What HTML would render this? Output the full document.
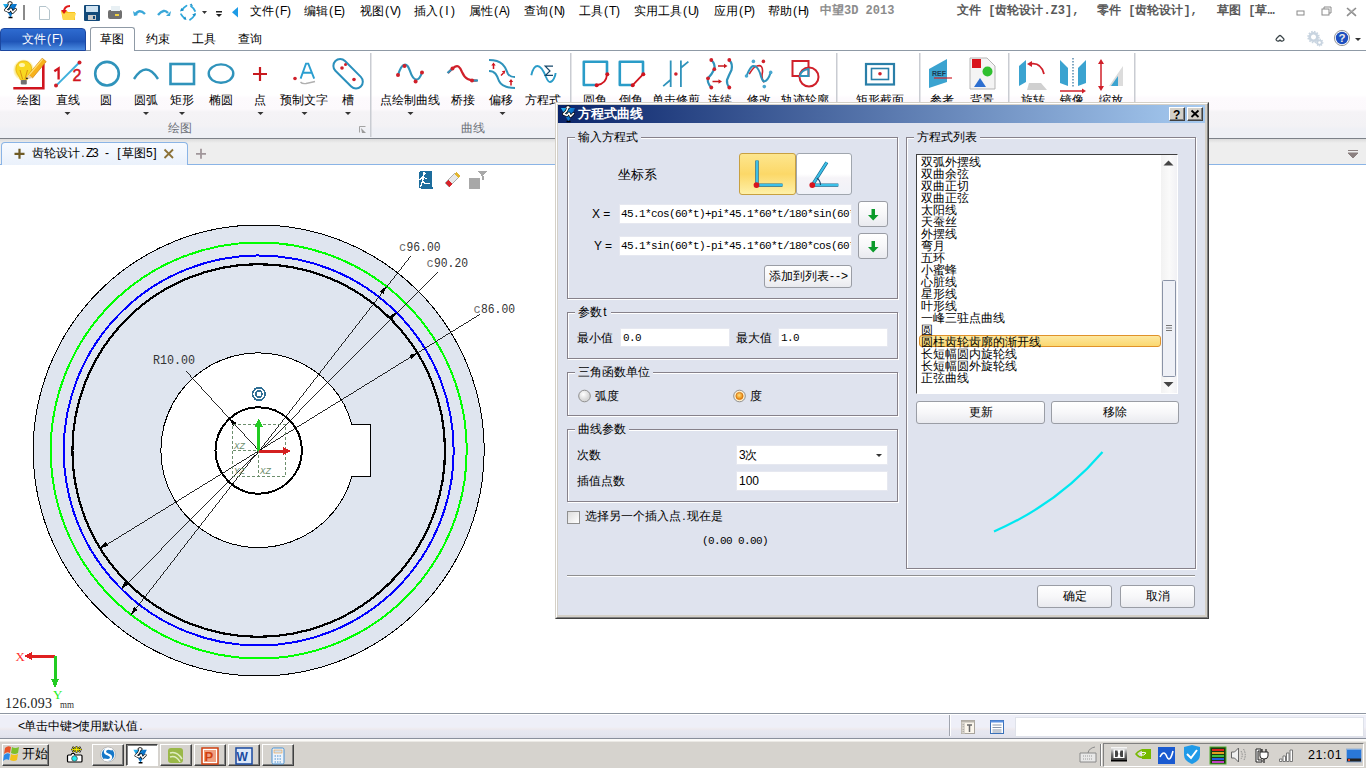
<!DOCTYPE html>
<html><head><meta charset="utf-8">
<style>
*{margin:0;padding:0;box-sizing:border-box}
html,body{width:1366px;height:768px;overflow:hidden;background:#fff;font-family:"Liberation Sans",sans-serif;font-size:12px;color:#000}
.a{position:absolute}
.t{position:absolute;white-space:nowrap;line-height:14px}
#ribbon{left:0;top:51px;width:1366px;height:88px;background:linear-gradient(#fff 0px,#fff 44px,#fdfafd 47px,#fcf9fc 58px,#f5f3f6 61px,#f3f2f5 75px,#eff0f5 78px,#eef0f5 87px);border-bottom:1px solid #7c8188}
#doctabs{left:0;top:139px;width:1366px;height:26px;background:linear-gradient(#dcdcdc,#eeeeee 4px,#eeeeee);border-bottom:1px solid #8ab4e6}
#status{left:0;top:713px;width:1366px;height:26px;background:linear-gradient(#fff 0px,#fff 1px,#eeeff8 1px,#eeeff8 13px,#eeeaee 15px,#e6e7f0 17px,#e4e5ee 21px,#dcdde8 25px);border-top:1px solid #8e96a2;border-bottom:1px solid #8a909c}
#taskbar{left:0;top:739px;width:1366px;height:29px;background:linear-gradient(#fbfaf8 0px,#fbfaf8 2px,#ebe9e5 2px,#ebe9e5 3px,#d6d3ce 3px)}
#dlg{left:555px;top:102px;width:653px;height:516px;background:#d4d0c8;border-right:1px solid #404040;border-bottom:1px solid #404040;border-top:1px solid #f4f3ee;border-left:1px solid #f4f3ee}
#dlgbody{left:2px;top:21px;width:648px;height:491px;background:#dfe3ee}
#dlgtitle{left:2px;top:2px;width:648px;height:18px;background:linear-gradient(90deg,#0a246a,#a6caf0)}
.grp{position:absolute;border:1px solid #86818a;box-shadow:inset 1px 1px 0 #fff, 1px 1px 0 #fff}
.gt{position:absolute;background:#dfe3ee;padding:0 3px;top:-8px;left:7px;line-height:14px;white-space:nowrap}
.inp{position:absolute;background:#fff;border:1px solid #e6e8f0}
.btn{position:absolute;background:linear-gradient(#fff,#f7f7f9 50%,#e9eaef);border:1px solid #9a9da5;border-radius:3px;text-align:center;line-height:20px}
.mono{font-family:"Liberation Mono",monospace}
.li{position:absolute;left:920px;white-space:nowrap;line-height:12px;font-size:12px}
c{display:inline-block;width:1em;text-align:center;font-style:normal}
h{display:inline-block;width:0.5em;text-align:center;font-weight:inherit}
</style></head><body>
<svg width="0" height="0" style="position:absolute"><defs>
<linearGradient id="appg" x1="0" y1="0" x2="1" y2="1"><stop offset="0" stop-color="#28c0f8"/><stop offset="0.5" stop-color="#0a70c8"/><stop offset="1" stop-color="#1a98e8"/></linearGradient>
<symbol id="app" viewBox="0 0 24 24">
 <path d="M3 4 H17 L10.5 17.5 Z" fill="url(#appg)"/>
 <path d="M10 3.5 L8.5 7 L5.5 10 L9 11.5 L11 9 L12.5 12.5 L15.5 9.5" fill="none" stroke="#000" stroke-width="2.8" stroke-linejoin="round" stroke-linecap="round"/>
 <ellipse cx="10" cy="3.2" rx="2.2" ry="1.5" fill="#fff" stroke="#000" stroke-width="0.9"/>
 <path d="M10 3.5 L8.5 7 L5.5 10 L9 11.5 L11 9 L12.5 12.5 L15.5 9.5" fill="none" stroke="#fff" stroke-width="1.5" stroke-linejoin="round" stroke-linecap="round"/>
 <path d="M8.5 17.5 H12.5" stroke="#000" stroke-width="1.5"/>
</symbol></defs></svg>
<!-- title bar -->
<div class="a" style="left:0;top:0;width:1366px;height:24px;background:#fff"></div>
<svg class="a" style="left:0;top:0" width="250" height="24">
 <use href="#app" x="0" y="0" width="24" height="24"/>
 <rect x="23" y="5" width="2" height="15" fill="#8a8a8a"/>
 <path d="M39.5 6.5 H46 L49.5 10 V19.5 H39.5 Z" fill="#fff" stroke="#b4c4cc"/>
 <path d="M61 11 H67 L68 12 H75 V20 H63 Z" fill="#f7c21e"/>
 <path d="M62 13 H76 L74 20 H63 Z" fill="#ffd84a"/>
 <path d="M70 6 Q64 6 64 12" fill="none" stroke="#e01a1a" stroke-width="2"/>
 <path d="M61 10 L67 10 L64 14 Z" fill="#e01a1a"/>
 <rect x="84" y="5" width="16" height="16" rx="1" fill="#134a7a"/>
 <rect x="86" y="6" width="12" height="6" fill="#cfe3f2"/>
 <rect x="88" y="15" width="8" height="5" fill="#c9c9c9"/>
 <rect x="93" y="16" width="2" height="3" fill="#134a7a"/>
 <rect x="108" y="10" width="14" height="9" rx="2" fill="#707070"/>
 <rect x="111" y="6" width="9" height="5" fill="#e8f0f4"/>
 <rect x="115" y="14" width="4" height="2" fill="#f0d040"/>
 <path d="M135 15 Q139 8 145 14" fill="none" stroke="#3aa7d8" stroke-width="2.4"/>
 <path d="M133 11 L138 15 L134 16 Z" fill="#3aa7d8"/>
 <path d="M158 15 Q164 8 168 13" fill="none" stroke="#3aa7d8" stroke-width="2.4"/>
 <path d="M171 11 L166 16 L170 16 Z" fill="#3aa7d8"/>
 <g stroke="#30a8dc" stroke-width="1.8" fill="none" stroke-linecap="round">
  <path d="M186.5 5.8 Q183.5 7.5 182.2 10"/><path d="M181 14.2 Q182.5 17 185 18.6"/><path d="M190 19.8 Q193.5 17.5 194.8 14.5"/><path d="M195 11 Q193.5 8 191 6.3"/>
 </g>
 <g fill="#1a90c8"><path d="M180 11.5 L184 10.2 L181.3 8 Z"/><path d="M186.5 20 L185.3 16.5 L183.2 19 Z"/><path d="M196 13 L192.2 14.5 L195 16.5 Z"/><path d="M189.5 5 L193 6.2 L191.5 3.5 Z"/></g>
 <path d="M202 11 H207 L204.5 14 Z" fill="#333"/>
 <rect x="216" y="11" width="6" height="1.5" fill="#222"/>
 <path d="M216 14 H222 L219 17 Z" fill="#222"/>
 <path d="M238 7 V17.5 L232 12.2 Z" fill="#1e9be6"/>
</svg>
<div class="t" style="left:250px;top:4px"><c>文</c><c>件</c><h>(</h><h>F</h><h>)</h></div>
<div class="t" style="left:304px;top:4px"><c>编</c><c>辑</c><h>(</h><h>E</h><h>)</h></div>
<div class="t" style="left:360px;top:4px"><c>视</c><c>图</c><h>(</h><h>V</h><h>)</h></div>
<div class="t" style="left:414px;top:4px"><c>插</c><c>入</c><h>(</h><h>I</h><h>)</h></div>
<div class="t" style="left:469px;top:4px"><c>属</c><c>性</c><h>(</h><h>A</h><h>)</h></div>
<div class="t" style="left:524px;top:4px"><c>查</c><c>询</c><h>(</h><h>N</h><h>)</h></div>
<div class="t" style="left:579px;top:4px"><c>工</c><c>具</c><h>(</h><h>T</h><h>)</h></div>
<div class="t" style="left:634px;top:4px"><c>实</c><c>用</c><c>工</c><c>具</c><h>(</h><h>U</h><h>)</h></div>
<div class="t" style="left:714px;top:4px"><c>应</c><c>用</c><h>(</h><h>P</h><h>)</h></div>
<div class="t" style="left:768px;top:4px"><c>帮</c><c>助</c><h>(</h><h>H</h><h>)</h></div>
<div class="t" style="left:820px;top:4px;color:#8c8c8c;font-weight:bold;font-family:'Liberation Mono',sans-serif"><c>中</c><c>望</c>3D 2013</div>
<div class="t" style="left:957px;top:4px;color:#595959;font-weight:bold;font-family:'Liberation Mono',sans-serif"><c>文</c><c>件</c> [<c>齿</c><c>轮</c><c>设</c><c>计</c>.Z3],</div>
<div class="t" style="left:1097px;top:4px;color:#595959;font-weight:bold;font-family:'Liberation Mono',sans-serif"><c>零</c><c>件</c> [<c>齿</c><c>轮</c><c>设</c><c>计</c>],</div>
<div class="t" style="left:1217px;top:4px;color:#595959;font-weight:bold;font-family:'Liberation Mono',sans-serif"><c>草</c><c>图</c> [<c>草</c>…</div>
<svg class="a" style="left:1290px;top:0" width="76" height="24">
 <rect x="7" y="11" width="7" height="4" fill="none" stroke="#8a8a8a"/>
 <rect x="32" y="9" width="7" height="6" fill="none" stroke="#8a8a8a"/><path d="M34 9 V7 H41 V13 H39" fill="none" stroke="#8a8a8a"/>
 <path d="M57 8 L66 16 M66 8 L57 16" stroke="#8a8a8a" stroke-width="1.6"/><path d="M58 8 L66 15 M65 8 L57 15" stroke="#b0b0b0" stroke-width="1"/>
</svg>
<!-- tab row -->
<div class="a" style="left:0;top:50px;width:1366px;height:1px;background:#8f9aa6"></div>
<div class="a" style="left:0;top:28px;width:86px;height:23px;border-radius:4px 4px 0 0;background:linear-gradient(#2e6bd0,#1f55b8 60%,#4a8ae0);border:1px solid #1c47a0"></div>
<div class="t" style="left:22px;top:32px;color:#fff"><c>文</c><c>件</c><h>(</h><h>F</h><h>)</h></div>
<div class="a" style="left:90px;top:27px;width:45px;height:25px;background:#fff;border:1px solid #8f9aa6;border-bottom:none;border-radius:3px 3px 0 0"></div>
<div class="t" style="left:100px;top:32px"><c>草</c><c>图</c></div>
<div class="t" style="left:146px;top:32px"><c>约</c><c>束</c></div>
<div class="t" style="left:192px;top:32px"><c>工</c><c>具</c></div>
<div class="t" style="left:238px;top:32px"><c>查</c><c>询</c></div>

<div id="ribbon" class="a"></div>
<svg class="a" style="left:0;top:0" width="1366" height="140">
 <defs>
  <linearGradient id="tl" x1="0" y1="0" x2="1" y2="1"><stop offset="0" stop-color="#6cc6e6"/><stop offset="1" stop-color="#1f7fa8"/></linearGradient>
  <radialGradient id="bulb"><stop offset="0" stop-color="#fff8a0"/><stop offset="0.6" stop-color="#f5d21a"/><stop offset="1" stop-color="#f7e97a" stop-opacity="0.3"/></radialGradient>
 </defs>
 <!-- separators -->
 <g fill="#c9ccd2">
  <rect x="370" y="53" width="1.5" height="84"/><rect x="570" y="53" width="1.5" height="84"/>
  <rect x="836" y="53" width="1.5" height="84"/><rect x="919" y="53" width="1.5" height="84"/>
  <rect x="1008" y="53" width="1.5" height="84"/><rect x="1134" y="53" width="1.5" height="84"/>
 </g>
 <!-- draw -->
 <circle cx="23.7" cy="70" r="10.5" fill="url(#bulb)"/>
 <path d="M23.7 61 C29 61 32 65 31.5 70 C31 74 28 76 27 80 H20.5 C19.5 76 16.5 74 16 70 C15.5 65 18.5 61 23.7 61 Z" fill="#f8d820" stroke="#e8b010" stroke-width="0.8"/>
 <ellipse cx="22" cy="65" rx="3" ry="2" fill="#fff6b0"/>
 <path d="M20 70 L22.5 79 M27.5 70 L25 79" stroke="#d88a10" stroke-width="0.9"/>
 <rect x="20.8" y="80" width="6" height="4.5" rx="1" fill="#707070"/>
 <path d="M43.3 64 V88.2 H13.3" fill="none" stroke="#d0141e" stroke-width="2.6"/>
 <path d="M28.5 74.5 L42.2 58.2 L46.2 61.6 L32.5 78 Z" fill="#f7b21c" stroke="#d0800a" stroke-width="0.7"/>
 <path d="M29 75 L42.8 58.8" stroke="#ffe070" stroke-width="1.2"/>
 <path d="M28.5 74.5 L32.5 78 L25.6 79.5 Z" fill="#f0d0a0"/>
 <path d="M26.8 77.2 L28.3 78.5 L25.6 79.5 Z" fill="#111"/>
 <!-- line -->
 <path d="M54.3 71.2 L58.6 68.3 V79.6" fill="none" stroke="#d0141e" stroke-width="2.3"/>
 <text x="72.5" y="80.8" font-family="Liberation Sans" font-size="16" fill="#d0141e" stroke="#d0141e" stroke-width="0.5">2</text>
 <line x1="56.4" y1="85.4" x2="79.6" y2="62.2" stroke="#40b0dc" stroke-width="2"/>
 <circle cx="56" cy="85.5" r="2" fill="#d0202a"/><circle cx="79.5" cy="62.5" r="2" fill="#d0202a"/>
 <!-- circle -->
 <circle cx="107" cy="73.7" r="11.8" fill="none" stroke="#2f93bb" stroke-width="2.6"/>
 <!-- arc -->
 <path d="M134 79 Q146 60 158 79" fill="none" stroke="#2f93bb" stroke-width="2.4"/>
 <!-- rect -->
 <rect x="170.5" y="64" width="23.5" height="20" fill="none" stroke="#2f93bb" stroke-width="2.6"/>
 <!-- ellipse -->
 <ellipse cx="221" cy="73.6" rx="12.3" ry="9.2" fill="none" stroke="#2f93bb" stroke-width="2.4"/>
 <!-- point -->
 <path d="M253 74 H267 M260 67 V81" stroke="#c8191e" stroke-width="2.2"/>
 <!-- text -->
 <circle cx="295" cy="78.5" r="1.8" fill="#d0202a"/>
 <path d="M300.6 78.6 L306 63.6 H308.3 L314.2 78.6 M303 72.8 H311.5" fill="none" stroke="#2a9ed0" stroke-width="1.9"/>
 <path d="M300.5 82 Q302 84 306 83.5 Q311 82.5 315 81.5" fill="none" stroke="#b0b0b0" stroke-width="1.3"/>
 <!-- slot -->
 <rect x="330.1" y="67" width="36" height="13.6" rx="6.8" transform="rotate(45 348.1 73.8)" fill="none" stroke="#2a90bc" stroke-width="2"/>
 <circle cx="342" cy="68" r="1.8" fill="#d0202a"/><circle cx="345.5" cy="64.5" r="1.5" fill="#d0202a"/><circle cx="354" cy="79.5" r="1.8" fill="#d0202a"/>
 <!-- dropdown arrows -->
 <g fill="#333">
  <path d="M64.5 112 h6 l-3 3z"/><path d="M143 112 h6 l-3 3z"/><path d="M179 112 h6 l-3 3z"/>
  <path d="M257.5 112 h6 l-3 3z"/><path d="M301.5 112 h6 l-3 3z"/><path d="M345 112 h6 l-3 3z"/>
  <path d="M407.5 112 h6 l-3 3z"/><path d="M499.5 112 h6 l-3 3z"/>
 </g>
 <path d="M359.5 132.5 V126.5 H365.5" fill="none" stroke="#9a9a9a" stroke-width="0.9"/><path d="M361 128 L366 133 H362z" fill="#9a9a9a"/>
 <!-- curve group -->
 <path d="M398 75 C402 62 407 62 410 71 C413 80 418 84 422 72.5" fill="none" stroke="#2f93bb" stroke-width="2.2"/>
 <circle cx="398" cy="75" r="2" fill="#d0202a"/><circle cx="404.5" cy="66" r="2" fill="#d0202a"/><circle cx="415.6" cy="81.5" r="2" fill="#d0202a"/><circle cx="422" cy="72.5" r="2" fill="#d0202a"/>
 <path d="M448 73 L453 68 C458 64 460 67 462 72 C465 79 469 81 477 80.5" fill="none" stroke="#d0202a" stroke-width="2.2"/>
 <path d="M447.5 73 L452 69" stroke="#2f93bb" stroke-width="2.2"/><path d="M472 80.5 H478" stroke="#2f93bb" stroke-width="2.2"/>
 <circle cx="452.5" cy="68.5" r="2" fill="#d0202a"/><circle cx="472" cy="80.5" r="2" fill="#d0202a"/>
 <path d="M489 60 C505 60 506 70 508 74 C510 77 512 77 515 77" fill="none" stroke="#2f93bb" stroke-width="2"/>
 <path d="M489 71 C495 71 497 75 499 81 C502 87 509 88 515 88" fill="none" stroke="#2f93bb" stroke-width="2"/>
 <path d="M493.5 69 V65 M501 75.5 L503.5 73 M511 85.5 V81.5" stroke="#d0141e" stroke-width="1.5"/>
 <path d="M491.3 65.5 L493.5 62.5 L495.7 65.5 Z M501.8 71.3 L505.3 70.5 L504.5 74 Z M508.8 82 L511 79 L513.2 82 Z" fill="#d0141e"/>
 <path d="M531.3 75.2 C533 68 535.5 66 537.5 66 C541 66 544 72 546 77 C547.5 80.5 549 82 550 82 C553 82 555.5 76 555.6 73" fill="none" stroke="#2a9cc8" stroke-width="1.9"/>
 <path d="M553 66.2 H545.2 L550 71 L545.5 75.3 H553" fill="none" stroke="#15476a" stroke-width="1.2"/>
 <!-- modify group -->
 <path d="M596.7 85 H583.8 V61.8 H607 V74.3" fill="none" stroke="#2a9cc8" stroke-width="2.6" stroke-linejoin="round"/>
 <path d="M607 74.3 Q606.5 84 596.7 85.2" fill="none" stroke="#d0141e" stroke-width="1.8"/>
 <circle cx="607.3" cy="74.3" r="2" fill="#d0141e"/><circle cx="596.7" cy="85.2" r="2" fill="#d0141e"/>
 <path d="M632.7 85 H619.8 V61.8 H643 V74.3" fill="none" stroke="#2a9cc8" stroke-width="2.6" stroke-linejoin="round"/>
 <path d="M643 74.3 L632.7 85.2" stroke="#d0141e" stroke-width="1.8"/>
 <circle cx="643.3" cy="74.3" r="2" fill="#d0141e"/><circle cx="632.7" cy="85.2" r="2" fill="#d0141e"/>
 <path d="M670.7 60.5 V87 M680.9 60.5 V87 M663.2 86.1 L670.7 79.7 M680.9 67.8 L688.4 61.6" stroke="#2f93bb" stroke-width="1.8"/>
 <circle cx="675.9" cy="74" r="1.8" fill="#d0202a"/>
 <path d="M711.3 60 Q715.5 64 714.3 69.2 Q712 74 708 78.3 Q707 83 711.3 87.5" fill="none" stroke="#2f93bb" stroke-width="2.2"/>
 <path d="M729.3 60 Q733 64 731.5 70 Q729 75 727 80 Q726.5 84 729.3 87.5" fill="none" stroke="#2f93bb" stroke-width="2.2"/>
 <path d="M718 66 H725 M712.5 81.5 H719" stroke="#c8191e" stroke-width="1.6"/>
 <path d="M724 63.8 L727.5 66 L724 68.2 Z M718.5 79.3 L722 81.5 L718.5 83.7 Z" fill="#c8191e"/>
 <g fill="#d0202a"><circle cx="711.3" cy="60" r="1.9"/><circle cx="729.3" cy="60" r="1.9"/><circle cx="714.3" cy="69.2" r="1.9"/><circle cx="708" cy="78.3" r="1.9"/><circle cx="711.3" cy="87.5" r="1.9"/><circle cx="729.3" cy="87.5" r="1.9"/></g>
 <path d="M749.2 74.2 Q754 66 757 66 Q763 64 762.5 72 Q761 78 763.9 82.4" fill="none" stroke="#d0202a" stroke-width="1.6"/>
 <path d="M746.5 76 Q750 67 753 66 Q757 65 760 73 Q762 81 764 81.5 Q768 81 770.7 72.4" fill="none" stroke="#2f93bb" stroke-width="2"/>
 <g fill="#4aa8d0"><circle cx="753.4" cy="61.4" r="1.8"/><circle cx="746.5" cy="76" r="1.8"/><circle cx="770.7" cy="72.4" r="1.8"/><circle cx="764.3" cy="86.6" r="1.8"/></g>
 <circle cx="763.4" cy="61.4" r="1.8" fill="#d0202a"/>
 <rect x="792.5" y="61" width="16" height="15" fill="none" stroke="#d0202a" stroke-width="2"/>
 <circle cx="809" cy="77" r="9.5" fill="none" stroke="#d0202a" stroke-width="2"/>
 <path d="M800 76 Q801 70 808.5 69 V76 Z" fill="none" stroke="#2f93bb" stroke-width="1.8"/>
 <!-- section -->
 <rect x="866" y="64" width="28" height="20.5" fill="none" stroke="#2a7fa8" stroke-width="2.2"/>
 <rect x="871.5" y="68.5" width="17" height="11" fill="none" stroke="#2a7fa8" stroke-width="1.6"/>
 <circle cx="880" cy="73.7" r="1.8" fill="#d0202a"/>
 <!-- ref -->
 <path d="M929 69 L947 59 V82 L929 88 Z" fill="#3ba3d0"/>
 <text x="932" y="76" font-family="Liberation Sans" font-weight="bold" font-size="7" fill="#1a3b55">REF</text>
 <path d="M934 78 H952" stroke="#d0202a" stroke-width="1.2"/>
 <path d="M970 58 H987 L995 66 V89 H970 Z" fill="#f4f4f4" stroke="#b5b5b5"/>
 <rect x="972" y="59" width="9" height="9" fill="#d9141c"/>
 <circle cx="987.5" cy="71.5" r="5" fill="#2fc02f"/>
 <path d="M974 87 L980 78 L986 87 Z" fill="#2d6fd0"/>
 <!-- transform -->
 <path d="M1019 66 L1026 60 V82 L1019 86 Z" fill="#3ba3d0"/>
 <path d="M1029 83 H1041 L1047 90 H1027 Z" fill="#d0d0d0"/>
 <path d="M1030 64 Q1041 62 1044 74" fill="none" stroke="#d0202a" stroke-width="1.8"/>
 <path d="M1027 64 L1032 61 L1032 67 Z" fill="#d0202a"/>
 <path d="M1060 60 L1068 68 V86 L1060 83 Z M1086 60 L1078 68 V86 L1086 83 Z" fill="#3ba3d0"/>
 <path d="M1073 58 V88" stroke="#2f6f9a" stroke-width="1.2" stroke-dasharray="1.5 1.5"/>
 <path d="M1060 91 H1083" stroke="#d0202a" stroke-width="1.5"/><path d="M1082 88.5 L1086 91 L1082 93.5Z" fill="#d0202a"/>
 <path d="M1101 61 V89" stroke="#d0202a" stroke-width="1.5"/><path d="M1098 64 L1101 59 L1104 64 Z M1098 86 L1101 91 L1104 86 Z" fill="#d0202a"/>
 <path d="M1109 86 L1123 66 V86 Z" fill="#dcdcdc"/><path d="M1111 86 L1118 76 V86 Z" fill="#3ba3d0"/>
</svg>
<div class="t" style="left:17px;top:93px"><c>绘</c><c>图</c></div>
<div class="t" style="left:56px;top:93px"><c>直</c><c>线</c></div>
<div class="t" style="left:100px;top:93px"><c>圆</c></div>
<div class="t" style="left:134px;top:93px"><c>圆</c><c>弧</c></div>
<div class="t" style="left:170px;top:93px"><c>矩</c><c>形</c></div>
<div class="t" style="left:209px;top:93px"><c>椭</c><c>圆</c></div>
<div class="t" style="left:254px;top:93px"><c>点</c></div>
<div class="t" style="left:280px;top:93px"><c>预</c><c>制</c><c>文</c><c>字</c></div>
<div class="t" style="left:342px;top:93px"><c>槽</c></div>
<div class="t" style="left:380px;top:93px"><c>点</c><c>绘</c><c>制</c><c>曲</c><c>线</c></div>
<div class="t" style="left:451px;top:93px"><c>桥</c><c>接</c></div>
<div class="t" style="left:489px;top:93px"><c>偏</c><c>移</c></div>
<div class="t" style="left:525px;top:93px"><c>方</c><c>程</c><c>式</c></div>
<div class="t" style="left:583px;top:93px"><c>圆</c><c>角</c></div>
<div class="t" style="left:619px;top:93px"><c>倒</c><c>角</c></div>
<div class="t" style="left:652px;top:93px"><c>单</c><c>击</c><c>修</c><c>剪</c></div>
<div class="t" style="left:708px;top:93px"><c>连</c><c>续</c></div>
<div class="t" style="left:747px;top:93px"><c>修</c><c>改</c></div>
<div class="t" style="left:781px;top:93px"><c>轨</c><c>迹</c><c>轮</c><c>廓</c></div>
<div class="t" style="left:856px;top:93px"><c>矩</c><c>形</c><c>截</c><c>面</c></div>
<div class="t" style="left:930px;top:93px"><c>参</c><c>考</c></div>
<div class="t" style="left:970px;top:93px"><c>背</c><c>景</c></div>
<div class="t" style="left:1021px;top:93px"><c>旋</c><c>转</c></div>
<div class="t" style="left:1060px;top:93px"><c>镜</c><c>像</c></div>
<div class="t" style="left:1099px;top:93px"><c>缩</c><c>放</c></div>
<div class="t" style="left:168px;top:121px;color:#6d7178"><c>绘</c><c>图</c></div>
<div class="t" style="left:461px;top:121px;color:#6d7178"><c>曲</c><c>线</c></div>
<svg class="a" style="left:1260px;top:26px" width="106" height="24">
 <path d="M16.5 14.5 Q15.5 13.5 16.5 12.5 L19 10 Q20 9 21 10 L23.5 12.5 Q24.5 13.5 23.5 14.5 L22.5 15 Q21.5 15.5 20.5 14.5 L20 14 L19.5 14.5 Q18.5 15.5 17.5 15 Z" fill="#fff" stroke="#3a4448" stroke-width="1.2"/>
 <g transform="translate(53.5 11)" fill="none" stroke="#c8d4e0"><circle r="3.8" stroke-width="2.6"/><circle r="5.4" stroke-width="1.6" stroke-dasharray="1.6 1.2"/></g>
 <g transform="translate(59.5 16.5)" fill="none" stroke="#c8d4e0"><circle r="2.2" stroke-width="1.8"/><circle r="3.3" stroke-width="1.2" stroke-dasharray="1.2 1"/></g>
 <circle cx="82" cy="12" r="7.6" fill="#fff" stroke="#8a8a8a" stroke-width="0.9"/>
 <circle cx="82" cy="12" r="6.2" fill="#1d4fc0"/>
 <text x="78.6" y="16.2" font-family="Liberation Sans" font-weight="bold" font-size="11.5" fill="#e8e8e8">?</text>
 <path d="M95 12 h6 l-3 3z" fill="#333"/>
</svg>
<div id="doctabs" class="a"></div>
<div class="a" style="left:1px;top:142px;width:187px;height:23px;background:linear-gradient(#f7faff,#eaf1fb);border:1px solid #8ab4e6;border-bottom:none;border-radius:4px 4px 0 0"></div>
<svg class="a" style="left:0;top:140px" width="240" height="25">
 <path d="M14.5 13.8 H24.5 M19.5 8.8 V18.8" stroke="#6e5a24" stroke-width="2.2"/>
 <path d="M164.5 9.5 L173 18 M173 9.5 L164.5 18" stroke="#8c7238" stroke-width="1.8"/>
 <path d="M196 13.8 H206 M201 8.8 V18.8" stroke="#a0969a" stroke-width="1.8"/>
</svg>
<div class="t" style="left:32px;top:146px"><c>齿</c><c>轮</c><c>设</c><c>计</c><h>.</h><h>Z</h><h>3</h><h> </h><h>-</h><h> </h><h>[</h><c>草</c><c>图</c><h>5</h><h>]</h></div>
<svg class="a" style="left:1340px;top:145px" width="26" height="20">
 <path d="M8 5.5 H18 M8 8 H18 L13 13 Z" fill="#8b8080" stroke="#8b8080" stroke-width="1"/>
</svg>

<!-- canvas -->
<svg class="a" style="left:0;top:165px" width="1366" height="547" viewBox="0 165 1366 547" shape-rendering="crispEdges">
<circle cx="258.7" cy="450.5" r="225.5" fill="#dfe5ef" stroke="#000" stroke-width="1"/>
<circle cx="258.7" cy="450.5" r="208" fill="none" stroke="#00ff00" stroke-width="2"/>
<circle cx="258.7" cy="450.5" r="195" fill="none" stroke="#0000ff" stroke-width="2"/>
<circle cx="258.7" cy="450.5" r="186.3" fill="none" stroke="#000" stroke-width="2.2"/>
<path d="M352 424.5 H370.5 V476 H352 A97.3 97.3 0 1 1 352 424.5 Z" fill="#fff" stroke="#000" stroke-width="1"/>
<circle cx="258.7" cy="450.5" r="43.2" fill="none" stroke="#000" stroke-width="2"/>
<g stroke="#000" stroke-width="0.85" fill="none">
 <line x1="410.4" y1="255.5" x2="131" y2="614.8"/>
 <line x1="437" y1="271.5" x2="121.5" y2="589.3"/>
 <line x1="480.2" y1="314.2" x2="100.9" y2="548.3"/>
 <line x1="185.8" y1="370.9" x2="258.7" y2="450.5"/>
</g>
<g fill="#000">
 <path d="M386.4 286.3 L383.3 294.1 L379.7 291.2 Z"/>
 <path d="M131.0 614.7 L134.1 606.9 L137.7 609.8 Z"/>
 <path d="M396.3 312.3 L392.3 319.6 L389.0 316.4 Z"/>
 <path d="M121.1 588.7 L125.1 581.4 L128.4 584.6 Z"/>
 <path d="M417.4 352.9 L411.8 359.0 L409.3 355.1 Z"/>
 <path d="M100.0 548.1 L105.6 542.0 L108.1 545.9 Z"/>
 <path d="M229.5 418.6 L236.6 423.0 L233.2 426.1 Z"/>
</g>
<g stroke="#6c8e6c" stroke-width="1" stroke-dasharray="3 2" fill="none">
 <rect x="232.5" y="424.5" width="53" height="51.5"/>
 <line x1="232.5" y1="450.5" x2="285.5" y2="450.5"/>
 <line x1="258.7" y1="424.5" x2="258.7" y2="476"/>
</g>
<g font-family="Liberation Mono" font-size="9" fill="#6c8e6c">
 <text x="234" y="449" font-style="italic">XZ</text>
 <text x="234" y="474" font-style="italic">YZ</text>
 <text x="260" y="474" font-style="italic">XZ</text>
</g>
<path d="M258.7 450.5 V425" stroke="#22cc22" stroke-width="3"/>
<path d="M254.5 427 L258.7 418.5 L263 427 Z" fill="#22cc22"/>
<path d="M258.7 451 H284" stroke="#d42020" stroke-width="3"/>
<path d="M283 446.8 L291.5 451 L283 455.2 Z" fill="#d42020"/>
<circle cx="258.9" cy="394" r="6.3" fill="none" stroke="#2f6e94" stroke-width="1.6"/>
<circle cx="258.9" cy="394" r="3" fill="none" stroke="#2f6e94" stroke-width="1.6"/>
<g font-family="Liberation Mono" font-size="12">
 <text x="399" y="250.5" fill="#6f6f6f">c</text><text x="406.5" y="250.5" fill="#333" textLength="34" lengthAdjust="spacingAndGlyphs">96.00</text>
 <text x="426.5" y="267" fill="#6f6f6f">c</text><text x="434" y="267" fill="#333" textLength="34" lengthAdjust="spacingAndGlyphs">90.20</text>
 <text x="473.5" y="312.5" fill="#6f6f6f">c</text><text x="481" y="312.5" fill="#333" textLength="34" lengthAdjust="spacingAndGlyphs">86.00</text>
 <text x="153" y="364" fill="#333" textLength="42" lengthAdjust="spacingAndGlyphs">R10.00</text>
</g>
<!-- axis indicator -->
<path d="M55 656 H30" stroke="#e02020" stroke-width="3"/>
<path d="M32 652 L24 656 L32 660 Z" fill="#e02020"/>
<path d="M55 656 V680" stroke="#22cc22" stroke-width="3"/>
<path d="M51 679 L55 688 L59 679 Z" fill="#22cc22"/>
<text x="15.5" y="661" font-family="Liberation Serif" font-size="13" fill="#ff3030">X</text>
<text x="53" y="699" font-family="Liberation Serif" font-size="13" fill="#22ee22">Y</text>
<text x="5" y="708" font-family="Liberation Serif" font-size="14" fill="#222" textLength="47" lengthAdjust="spacing">126.093</text>
<text x="60" y="708" font-family="Liberation Serif" font-size="10.5" fill="#333" textLength="14" lengthAdjust="spacingAndGlyphs">mm</text>
<!-- canvas icons -->
<path d="M421 171 H430 Q432 171 432 173 V186 L433.5 188.5 H421 Q419 188.5 419 186.5 V173 Q419 171 421 171 Z" fill="#1d6d9d"/>
<path d="M423.5 176 L422.5 181.5 M419.8 179.3 L422.8 176.3 L426 178.8 M422.5 181.5 L425.5 183.8 L429 183.3 M422.5 181.5 L420.8 186.3" stroke="#fff" stroke-width="1.3" fill="none" stroke-linecap="round"/>
<circle cx="424.3" cy="173.6" r="1.4" fill="#fff"/>
<path d="M445 183 L455 173 L459 177 L449 187 Z" fill="#e8e8e8" stroke="#999" stroke-width="0.8"/>
<path d="M445 183 L448 180 L452 184 L449 187 Z" fill="#d8232a"/>
<path d="M454 174 L456 172 L460 176 L458 178 Z" fill="#e2b630"/>
<rect x="469" y="177.5" width="10.5" height="11" fill="#a8a8a8"/>
<path d="M478 171 H487 L483.5 175.5 V180 H481.5 V175.5 Z" fill="#a8a8a8"/>
</svg>


<div id="status" class="a"></div>
<div class="t" style="left:18px;top:719px"><h>&lt;</h><c>单</c><c>击</c><c>中</c><c>键</c><h>&gt;</h><c>使</c><c>用</c><c>默</c><c>认</c><c>值</c><h>.</h></div>
<div class="a" style="left:949px;top:715px;width:1px;height:21px;background:#a0a4ae;box-shadow:1px 0 0 #fff"></div>
<svg class="a" style="left:955px;top:714px" width="60" height="25">
 <rect x="6.5" y="6.5" width="13" height="13" fill="#fbf6ec" stroke="#a8a49c"/>
 <rect x="6.5" y="6.5" width="13" height="2" fill="#b8b4ac"/>
 <rect x="6.5" y="8" width="3.5" height="11.5" fill="#d8d4cc"/>
 <path d="M8.2 10 V10.6 M8.2 12.5 V13.1 M8.2 15 V15.6 M8.2 17.3 V17.9" stroke="#777"/>
 <path d="M12 11 H17 M14.5 11 V18" stroke="#6a6a6a" stroke-width="1.5"/>
 <rect x="35.5" y="6.5" width="13" height="13" fill="#fff" stroke="#3a70b8"/>
 <rect x="35.5" y="6.5" width="13" height="2" fill="#5a90e0"/>
 <path d="M37.5 11 H46.5 M37.5 13.5 H46.5 M37.5 16 H46.5 M37.5 18 H46.5" stroke="#7a8aa0" stroke-width="0.9"/>
</svg>
<div class="a" style="left:1015px;top:717px;width:349px;height:20px;background:#fff;border:1px solid #dfe2ea"></div>
<div id="taskbar" class="a"></div>
<div class="a" style="left:2px;top:744px;width:47px;height:22px;background:#d6d3ce;border:1px solid;border-color:#fff #404040 #404040 #fff;box-shadow:inset -1px -1px 0 #808080"></div>
<div class="t" style="left:22px;top:747px;font-size:13px"><c>开</c><c>始</c></div>
<div class="a" style="left:92px;top:744px;width:32px;height:22px;background:#d6d3ce;border:1px solid;border-color:#fff #404040 #404040 #fff;box-shadow:inset -1px -1px 0 #808080"></div>
<div class="a" style="left:126px;top:744px;width:32px;height:22px;background:#fff;border:1px solid;border-color:#404040 #fff #fff #404040;box-shadow:inset 1px 1px 0 #808080"></div>
<div class="a" style="left:160px;top:744px;width:32px;height:22px;background:#d6d3ce;border:1px solid;border-color:#fff #404040 #404040 #fff;box-shadow:inset -1px -1px 0 #808080"></div>
<div class="a" style="left:194px;top:744px;width:32px;height:22px;background:#d6d3ce;border:1px solid;border-color:#fff #404040 #404040 #fff;box-shadow:inset -1px -1px 0 #808080"></div>
<div class="a" style="left:228px;top:744px;width:32px;height:22px;background:#d6d3ce;border:1px solid;border-color:#fff #404040 #404040 #fff;box-shadow:inset -1px -1px 0 #808080"></div>
<div class="a" style="left:262px;top:744px;width:32px;height:22px;background:#d6d3ce;border:1px solid;border-color:#fff #404040 #404040 #fff;box-shadow:inset -1px -1px 0 #808080"></div>
<svg class="a" style="left:0;top:739px" width="300" height="29">
 <path d="M5 9 Q8 6 11 8 L10 14 Q7 12 4 15 Z" fill="#e8542a"/>
 <path d="M12 8 Q15 10 19 8 L18 14 Q15 16 11 14 Z" fill="#7cbf2a"/>
 <path d="M4 16 Q7 13 10 15 L9 21 Q6 19 3 22 Z" fill="#2a8ae8"/>
 <path d="M11 15 Q14 17 18 15 L17 21 Q14 23 10 21 Z" fill="#f2c21a"/>
 <g transform="translate(76.5 10.5)"><path d="M-5.5 0 H5.5 M0 -3.5 V3.5 M-4 -2.5 L4 2.5 M-4 2.5 L4 -2.5" stroke="#000" stroke-width="1.6"/><path d="M-5 0 H5 M0 -3 V3 M-3.5 -2.2 L3.5 2.2 M-3.5 2.2 L3.5 -2.2" stroke="#f8f000" stroke-width="0.9"/></g>
 <path d="M68.5 16 H71 L72 14.5 H74 L75 16 H81 Q82 16 82 17 V22 Q82 23 81 23 H68.5 Q67.5 23 67.5 22 V17 Q67.5 16 68.5 16 Z" fill="#fff" stroke="#000" stroke-width="1.2"/>
 <circle cx="74.5" cy="19.5" r="2.8" fill="#20e8f0" stroke="#444" stroke-width="0.8"/>
 <circle cx="108" cy="15.5" r="7.5" fill="#fff" stroke="#aaa" stroke-width="0.8"/>
 <circle cx="108" cy="15.5" r="6.3" fill="#1577c8"/>
 <path d="M112 10.5 Q106 8.5 105 12 Q104.5 14.5 108 15.5 Q111.5 16.5 111 19 Q110 22 104 20.5" fill="none" stroke="#fff" stroke-width="2.2"/>
 <use href="#app" x="130.5" y="7" width="23" height="23"/>
 <rect x="168" y="9" width="15" height="15" rx="3" fill="#9ab848"/>
 <path d="M170 14 Q177 12 182 20 M170 18 Q176 16 180 23" stroke="#e0ecc0" stroke-width="1.5" fill="none"/>
 <rect x="202" y="9" width="16" height="16" fill="#fff" stroke="#d04010" stroke-width="1.5"/>
 <rect x="204" y="11" width="12" height="12" fill="#f0a080"/>
 <text x="204.5" y="22" font-family="Liberation Sans" font-weight="bold" font-size="13" fill="#d04010">P</text>
 <rect x="236" y="9" width="16" height="16" fill="#dde8f8" stroke="#1a4aa0" stroke-width="1.5"/>
 <text x="236.5" y="22" font-family="Liberation Sans" font-weight="bold" font-size="12" fill="#1a4aa0">W</text>
 <rect x="272" y="9" width="12" height="16" rx="1.5" fill="#eef4fb" stroke="#4a90d0"/>
 <rect x="274" y="11" width="8" height="3" fill="#cfe0f0" stroke="#f0a040" stroke-width="0.6"/>
 <path d="M274.5 17 H282 M274.5 20 H282 M274.5 23 H282" stroke="#4a90d0" stroke-width="1.2" stroke-dasharray="1.5 1"/>
</svg>
<!-- tray -->
<div class="a" style="left:1103px;top:743px;width:261px;height:24px;border:1px solid;border-color:#808080 #fff #fff #808080"></div>
<svg class="a" style="left:1075px;top:739px" width="291" height="29">
 <path d="M5 14 H21 V23 H5 Z" fill="#e8e8e8" stroke="#8a8a8a"/>
 <path d="M8 17 H18 M8 20 H18" stroke="#9a9a9a" stroke-dasharray="1 1"/>
 <path d="M13 14 Q14 9 20 8" fill="none" stroke="#8a8a8a"/>
 <rect x="25" y="5" width="1" height="22" fill="#808080"/><rect x="26" y="5" width="1" height="22" fill="#fff"/>
 <defs><linearGradient id="dolg" x1="0" y1="0" x2="0" y2="1"><stop offset="0" stop-color="#fff"/><stop offset="0.5" stop-color="#777"/><stop offset="1" stop-color="#333"/></linearGradient></defs>
 <rect x="36" y="8" width="16" height="14" fill="url(#dolg)"/><rect x="36" y="21" width="16" height="1.5" fill="#000"/>
 <rect x="38.5" y="10.5" width="11" height="8.5" fill="#fff"/>
 <path d="M40 11.5 H42.5 Q44 15 42.5 18 H40 Z M48 11.5 H45.5 Q44 15 45.5 18 H48 Z" fill="#444"/>
 <rect x="67" y="10" width="9" height="10" fill="#76b900"/>
 <path d="M61 15 Q66 9 72 11.5 Q76 14 71 18 Q65 20 61 15 Z" fill="none" stroke="#76b900" stroke-width="1.5"/>
 <path d="M65 15 Q68 12 71 14 Q69 17 66 16" fill="none" stroke="#fff" stroke-width="1"/>
 <rect x="83" y="8" width="17" height="17" fill="#1a5ad0"/>
 <path d="M85 18 Q89 10 92 18 Q95 24 98 12" fill="none" stroke="#fff" stroke-width="1.6"/>
 <path d="M109 8 L117 6 L125 8 V16 Q125 22 117 25 Q109 22 109 16 Z" fill="#1f9ae8"/>
 <path d="M112 15 L116 19 L122 11" fill="none" stroke="#fff" stroke-width="2"/>
 <rect x="135" y="8" width="16" height="17" fill="#1a3a10" stroke="#50b030"/>
 <g stroke-width="2"><path d="M137 11 H149" stroke="#e02020"/><path d="M137 14 H149" stroke="#e0a020"/><path d="M137 17 H149" stroke="#40c040"/><path d="M137 20 H149" stroke="#2060e0"/><path d="M137 23 H149" stroke="#c040c0"/></g>
 <path d="M156.5 13 H159.5 L163.5 9 V23 L159.5 19 H156.5 Z" fill="#f0f0f0" stroke="#666"/>
 <path d="M166 12 Q168.5 16 166 20 M168.5 10 Q172 16 168.5 22" fill="none" stroke="#888" stroke-dasharray="1.5 1"/>
 <path d="M182 10 H186 V12 H183 V21 H187 V23 H181 V10 Z" fill="#fff" stroke="#222" stroke-width="1"/>
 <path d="M185 13 H193 V17 Q193 20 189 20 Q185 20 185 17 Z" fill="#fff" stroke="#222"/>
 <path d="M187 10 V13 M191 10 V13 M189 20 V24" stroke="#222" stroke-width="1.2"/>
 <path d="M204.5 22.5 H207 V20 H204.5 Z M208 22.5 H210.5 V17 H208 Z M211.5 22.5 H214 V14 H211.5 Z M215 22.5 H217.5 V11 H215 Z" fill="#fff" stroke="#777"/>
 <rect x="271.5" y="10" width="15" height="13" fill="#fff" stroke="#8aa8d0" stroke-width="0.8"/>
 <rect x="272" y="10.5" width="14" height="12" fill="#2a78d8"/><rect x="272" y="19.5" width="14" height="3" fill="#222"/><rect x="273" y="20" width="2" height="2" fill="#e04020"/>
</svg>
<div class="t" style="left:1308px;top:748px;font-size:12.5px;letter-spacing:0.6px">21:01</div>

<!-- dialog -->
<div class="a" style="left:555px;top:102px;width:654px;height:517px;background:#d4d0c8;border:1px solid;border-color:#d4d0c8 #404040 #404040 #d4d0c8"></div>
<div class="a" style="left:556px;top:103px;width:652px;height:515px;border:1px solid;border-color:#fff #808080 #808080 #fff"></div>
<div class="a" style="left:558px;top:105px;width:647px;height:18px;background:linear-gradient(90deg,#0a246a,#a6caf0)"></div>
<svg class="a" style="left:558px;top:104px" width="20" height="19"><use href="#app" x="0" y="0" width="24" height="24"/></svg>
<div class="t" style="left:578px;top:107px;color:#fff;font-weight:bold;font-size:13px"><c>方</c><c>程</c><c>式</c><c>曲</c><c>线</c></div>
<div class="a" style="left:1169px;top:107px;width:16px;height:14px;background:#d4d0c8;border:1px solid;border-color:#fff #404040 #404040 #fff;box-shadow:inset -1px -1px 0 #808080"></div>
<div class="a" style="left:1187px;top:107px;width:16px;height:14px;background:#d4d0c8;border:1px solid;border-color:#fff #404040 #404040 #fff;box-shadow:inset -1px -1px 0 #808080"></div>
<svg class="a" style="left:1169px;top:107px" width="36" height="14">
 <text x="4" y="12" font-family="Liberation Sans" font-weight="bold" font-size="12" fill="#000">?</text>
 <path d="M22.5 3.5 L29.5 10 M29.5 3.5 L22.5 10" stroke="#000" stroke-width="1.8"/>
</svg>
<div class="a" style="left:558px;top:123px;width:647px;height:492px;background:#dfe3ee"></div>

<!-- group boxes -->
<div class="grp" style="left:567px;top:136.5px;width:331px;height:162px"><div class="gt"><c>输</c><c>入</c><c>方</c><c>程</c><c>式</c></div></div>
<div class="grp" style="left:567px;top:311.5px;width:331px;height:47px"><div class="gt"><c>参</c><c>数</c><h>t</h></div></div>
<div class="grp" style="left:567px;top:371.5px;width:331px;height:44px"><div class="gt"><c>三</c><c>角</c><c>函</c><c>数</c><c>单</c><c>位</c></div></div>
<div class="grp" style="left:567px;top:428.5px;width:331px;height:73px"><div class="gt"><c>曲</c><c>线</c><c>参</c><c>数</c></div></div>
<div class="grp" style="left:905.5px;top:136.5px;width:290px;height:432px"><div class="gt"><c>方</c><c>程</c><c>式</c><c>列</c><c>表</c></div></div>

<div class="t" style="left:618px;top:168px;font-size:13px"><c>坐</c><c>标</c><c>系</c></div>
<div class="a" style="left:739px;top:153px;width:57px;height:42px;border:1px solid #c8a040;border-radius:3px;background:linear-gradient(#fde68e,#fcd868 50%,#fef0a8)"></div>
<div class="a" style="left:796px;top:153px;width:56px;height:42px;border:1px solid #a0a6ae;border-radius:3px;background:linear-gradient(#fff,#fff 50%,#f6f4f8 60%,#f0f2f8)"></div>
<svg class="a" style="left:739px;top:153px" width="113" height="42">
 <path d="M18 7.5 V32.1 H43.5" fill="none" stroke="#1a6a90" stroke-width="3.4"/>
 <path d="M18 7.5 V32.1 H43.5" fill="none" stroke="#3cc0e8" stroke-width="2"/>
 <circle cx="17.5" cy="32.1" r="2.9" fill="#d8141e"/>
 <path d="M73.3 32.1 H99.3 M73.3 32.1 L87.8 9.3" fill="none" stroke="#1a6a90" stroke-width="3.4"/>
 <path d="M73.3 32.1 H99.3 M73.3 32.1 L87.8 9.3" fill="none" stroke="#3cc0e8" stroke-width="2"/>
 <path d="M81.5 32 A8.5 8.5 0 0 0 77.8 25" fill="none" stroke="#1a4a70" stroke-width="1.1"/>
 <circle cx="73.3" cy="32.1" r="2.9" fill="#d8141e"/>
</svg>
<div class="t" style="left:592px;top:207px;font-size:12px">X =</div>
<div class="t" style="left:594px;top:239px;font-size:12px">Y =</div>
<div class="inp" style="left:619px;top:204px;width:233px;height:20px;overflow:hidden"><div class="t mono" style="left:1px;top:2px;font-size:11px;letter-spacing:-0.6px">45.1*cos(60*t)+pi*45.1*60*t/180*sin(60*t)</div></div>
<div class="inp" style="left:619px;top:236px;width:233px;height:20px;overflow:hidden"><div class="t mono" style="left:1px;top:2px;font-size:11px;letter-spacing:-0.6px">45.1*sin(60*t)-pi*45.1*60*t/180*cos(60*t)</div></div>
<div class="btn" style="left:858px;top:201px;width:30px;height:26px"></div>
<div class="btn" style="left:858px;top:233px;width:30px;height:26px"></div>
<svg class="a" style="left:858px;top:201px" width="30" height="58">
 <path d="M13.5 8 H17 V14 H20.5 L15.2 19.5 L10 14 H13.5 Z" fill="#0a9a2a"/>
 <path d="M13.5 40 H17 V46 H20.5 L15.2 51.5 L10 46 H13.5 Z" fill="#0a9a2a"/>
</svg>
<div class="btn" style="left:764px;top:265px;width:88px;height:23px"><c>添</c><c>加</c><c>到</c><c>列</c><c>表</c><h>-</h><h>-</h><h>&gt;</h></div>

<div class="t" style="left:577px;top:331px"><c>最</c><c>小</c><c>值</c></div>
<div class="inp" style="left:620px;top:328px;width:110px;height:19px"></div>
<div class="t mono" style="left:623px;top:331px;font-size:11px;letter-spacing:-0.6px">0.0</div>
<div class="t" style="left:736px;top:331px"><c>最</c><c>大</c><c>值</c></div>
<div class="inp" style="left:778px;top:328px;width:110px;height:19px"></div>
<div class="t mono" style="left:781px;top:331px;font-size:11px;letter-spacing:-0.6px">1.0</div>

<svg class="a" style="left:570px;top:383px" width="200" height="26">
 <defs><radialGradient id="rg" cx="0.4" cy="0.35"><stop offset="0" stop-color="#fff"/><stop offset="1" stop-color="#d8d8d8"/></radialGradient>
 <radialGradient id="ro" cx="0.45" cy="0.4"><stop offset="0" stop-color="#ffe080"/><stop offset="1" stop-color="#e88a10"/></radialGradient></defs>
 <circle cx="14.5" cy="13" r="5.8" fill="url(#rg)" stroke="#8f8f8f" stroke-width="1"/>
 <circle cx="169.5" cy="13" r="5.8" fill="#fdf0d0" stroke="#8f8f8f" stroke-width="1"/>
 <circle cx="169.5" cy="13" r="3.6" fill="url(#ro)" stroke="#d07010" stroke-width="0.8"/>
</svg>
<div class="t" style="left:595px;top:389px"><c>弧</c><c>度</c></div>
<div class="t" style="left:750px;top:389px"><c>度</c></div>

<div class="t" style="left:577px;top:448px"><c>次</c><c>数</c></div>
<div class="inp" style="left:736px;top:445px;width:152px;height:20px"></div>
<div class="t" style="left:739px;top:448px"><h>3</h><c>次</c></div>
<svg class="a" style="left:870px;top:445px" width="18" height="20"><path d="M6 9 H12 L9 12 Z" fill="#333"/></svg>
<div class="t" style="left:577px;top:474px"><c>插</c><c>值</c><c>点</c><c>数</c></div>
<div class="inp" style="left:736px;top:471px;width:152px;height:20px"></div>
<div class="t" style="left:739px;top:474px">100</div>

<div class="a" style="left:567px;top:510.5px;width:13px;height:13px;border:1px solid #8f8f8f;background:linear-gradient(135deg,#dcdcdc,#fff)"></div>
<div class="t" style="left:585px;top:509px"><c>选</c><c>择</c><c>另</c><c>一</c><c>个</c><c>插</c><c>入</c><c>点</c><h>.</h><c>现</c><c>在</c><c>是</c></div>
<div class="t mono" style="left:702px;top:534px;font-size:11px;letter-spacing:-0.6px">(0.00 0.00)</div>

<!-- list -->
<div class="a" style="left:916px;top:154px;width:262px;height:240px;background:#fff;border:1px solid;border-color:#404040 #fff #fff #404040;overflow:hidden">
 <div class="a" style="left:2px;top:180px;width:242px;height:12px;border:1px solid #e0922a;border-radius:3px;background:linear-gradient(#fde8a0,#fbd870)"></div>
 <div class="a" style="left:-916px;top:-154px;width:1366px;height:768px"><div class="li" style="top:155px"><c>双</c><c>弧</c><c>外</c><c>摆</c><c>线</c></div><div class="li" style="top:167px"><c>双</c><c>曲</c><c>余</c><c>弦</c></div><div class="li" style="top:179px"><c>双</c><c>曲</c><c>正</c><c>切</c></div><div class="li" style="top:191px"><c>双</c><c>曲</c><c>正</c><c>弦</c></div><div class="li" style="top:203px"><c>太</c><c>阳</c><c>线</c></div><div class="li" style="top:215px"><c>天</c><c>蚕</c><c>丝</c></div><div class="li" style="top:227px"><c>外</c><c>摆</c><c>线</c></div><div class="li" style="top:239px"><c>弯</c><c>月</c></div><div class="li" style="top:251px"><c>五</c><c>环</c></div><div class="li" style="top:263px"><c>小</c><c>蜜</c><c>蜂</c></div><div class="li" style="top:275px"><c>心</c><c>脏</c><c>线</c></div><div class="li" style="top:287px"><c>星</c><c>形</c><c>线</c></div><div class="li" style="top:299px"><c>叶</c><c>形</c><c>线</c></div><div class="li" style="top:311px"><c>一</c><c>峰</c><c>三</c><c>驻</c><c>点</c><c>曲</c><c>线</c></div><div class="li" style="top:323px"><c>圆</c></div><div class="li" style="top:335px"><c>圆</c><c>柱</c><c>齿</c><c>轮</c><c>齿</c><c>廓</c><c>的</c><c>渐</c><c>开</c><c>线</c></div><div class="li" style="top:347px"><c>长</c><c>短</c><c>幅</c><c>圆</c><c>内</c><c>旋</c><c>轮</c><c>线</c></div><div class="li" style="top:359px"><c>长</c><c>短</c><c>幅</c><c>圆</c><c>外</c><c>旋</c><c>轮</c><c>线</c></div><div class="li" style="top:371px"><c>正</c><c>弦</c><c>曲</c><c>线</c></div></div>
 <div class="a" style="left:244px;top:0;width:17px;height:239px;background:linear-gradient(90deg,#f2f2f2,#fafafa 50%,#f0f0f4)"></div>
</div>
<svg class="a" style="left:1160px;top:154px" width="18" height="240">
 <path d="M3.5 11.5 H13.5 L8.5 6.5 Z" fill="#444"/>
 <rect x="2.5" y="126.5" width="13" height="96" rx="1" fill="#eef0f6" stroke="#8a93a6"/>
 <path d="M6 171.5 H12 M6 174 H12 M6 176.5 H12" stroke="#777" stroke-width="1"/>
 <path d="M3.5 228 H13.5 L8.5 233 Z" fill="#444"/>
</svg>
<div class="btn" style="left:916px;top:401px;width:129px;height:23px"><c>更</c><c>新</c></div>
<div class="btn" style="left:1051px;top:401px;width:128px;height:23px"><c>移</c><c>除</c></div>
<svg class="a" style="left:990px;top:448px" width="120" height="90">
 <path d="M4 83.5 C35 70 75 48 112.5 4" fill="none" stroke="#00e8f0" stroke-width="2.2"/>
</svg>

<div class="a" style="left:567px;top:575px;width:628px;height:1px;background:#8f8f8f;box-shadow:0 1px 0 #fff"></div>
<div class="btn" style="left:1037px;top:585px;width:75px;height:23px"><c>确</c><c>定</c></div>
<div class="btn" style="left:1120px;top:585px;width:75px;height:23px"><c>取</c><c>消</c></div>
</body></html>
